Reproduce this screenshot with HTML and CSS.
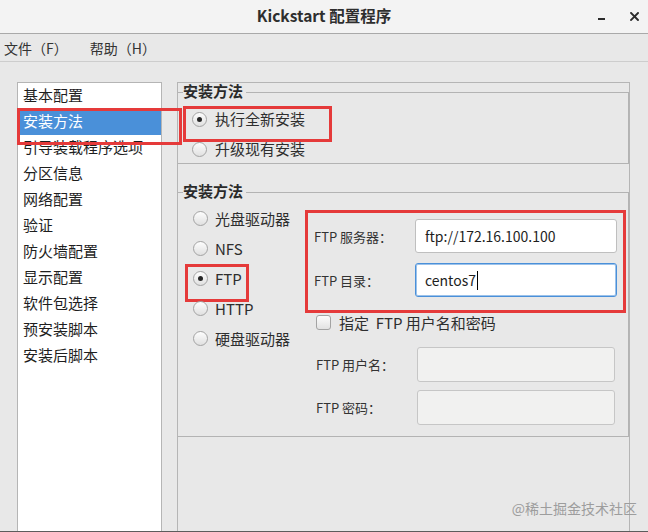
FILE: index.html
```html
<!DOCTYPE html>
<html lang="zh-CN">
<head>
<meta charset="utf-8">
<title>Kickstart 配置程序</title>
<link rel="stylesheet" href="styles.css">
</head>
<body>
<div class="window">
  <header class="titlebar">
    <div class="title">Kickstart 配置程序</div>
    <div class="wm-buttons">
      <span class="wm-min"></span>
      <svg class="wm-close" width="9" height="9" viewBox="0 0 9 9"><path d="M1 1L8 8M8 1L1 8" stroke="#2b2b2b" stroke-width="1.9" stroke-linecap="square" fill="none"/></svg>
    </div>
  </header>
  <nav class="menubar">
    <span class="menu-item">文件（F）</span>
    <span class="menu-item">帮助（H）</span>
  </nav>
  <main class="main">
    <ul class="nav-list">
      <li>基本配置</li>
      <li class="selected">安装方法</li>
      <li>引导装载程序选项</li>
      <li>分区信息</li>
      <li>网络配置</li>
      <li>验证</li>
      <li>防火墙配置</li>
      <li>显示配置</li>
      <li>软件包选择</li>
      <li>预安装脚本</li>
      <li>安装后脚本</li>
    </ul>
    <section class="panel">
      <fieldset class="frame frame-top">
        <legend>安装方法</legend>
        <div class="radio-list">
          <div class="radio-row marked"><span class="radio checked"></span>执行全新安装</div>
          <div class="radio-row"><span class="radio"></span>升级现有安装</div>
        </div>
      </fieldset>
      <fieldset class="frame frame-method">
        <legend>安装方法</legend>
        <div class="method-body">
          <div class="method-list">
            <div class="radio-row"><span class="radio"></span>光盘驱动器</div>
            <div class="radio-row"><span class="radio"></span>NFS</div>
            <div class="radio-row marked-ftp"><span class="radio checked"></span>FTP</div>
            <div class="radio-row"><span class="radio"></span>HTTP</div>
            <div class="radio-row"><span class="radio"></span>硬盘驱动器</div>
          </div>
          <div class="ftp-config">
            <div class="ftp-main">
              <span class="field-label">FTP 服务器：</span>
              <div class="entry">ftp://172.16.100.100</div>
              <span class="field-label">FTP 目录：</span>
              <div class="entry focused">centos7<span class="caret"></span></div>
            </div>
            <div class="check-row"><span class="checkbox"></span>指定&nbsp; FTP 用户名和密码</div>
            <div class="ftp-auth">
              <span class="field-label">FTP 用户名：</span>
              <div class="entry disabled"></div>
              <span class="field-label">FTP 密码：</span>
              <div class="entry disabled"></div>
            </div>
          </div>
        </div>
      </fieldset>
    </section>
  </main>
  <div class="watermark">@稀土掘金技术社区</div>
</div>
</body>
</html>
```
FILE: styles.css
```css
* { box-sizing: border-box; }
html, body { margin: 0; padding: 0; }
body {
  font-family: "Noto Sans CJK SC", "DejaVu Sans", sans-serif;
  color: #2a2a2a;
  background: #e8e8e8;
}
.window {
  width: 648px;
  height: 532px;
  display: flex;
  flex-direction: column;
  background: #e8e8e8;
  border-bottom: 1px solid #5c5c5c;
  position: relative;
  overflow: hidden;
}
.titlebar {
  height: 34px;
  flex: none;
  display: grid;
  grid-template-columns: 1fr auto 1fr;
  align-items: center;
  background: #f3f3f3;
  border-bottom: 1px solid #a9a9a9;
}
.title {
  grid-column: 2;
  font-size: 15.5px;
  font-weight: bold;
  line-height: 20px;
  padding-bottom: 4px;
  color: #2e2e2e;
}
.wm-buttons {
  grid-column: 3;
  justify-self: end;
  display: flex;
  align-items: center;
  gap: 25px;
  padding-right: 9px;
}
.wm-min {
  width: 7px;
  height: 2px;
  background: #2b2b2b;
  margin-top: 4px;
}
.wm-close { display: block; }
.menubar {
  height: 28px;
  flex: none;
  display: flex;
  align-items: center;
  gap: 22px;
  padding-left: 4px;
  font-size: 14px;
  color: #333;
  border-bottom: 1px solid #cdcdcd;
}
.main {
  flex: 1;
  min-height: 0;
  display: flex;
  align-items: stretch;
  padding: 20px 0 0 17px;
}
.nav-list {
  list-style: none;
  margin: 0;
  padding: 0;
  width: 145px;
  flex: none;
  background: #fff;
  border: 1px solid #b5b5b5;
  border-bottom: none;
  font-size: 15px;
  color: #1e1e1e;
}
.nav-list li {
  height: 26px;
  line-height: 23px;
  padding: 0 0 3px 5px;
  white-space: nowrap;
}
.nav-list li.selected {
  background: #4a90d9;
  color: #fff;
  position: relative;
}
.nav-list li.selected::after {
  content: "";
  position: absolute;
  left: -1px;
  top: -1px;
  width: 159px;
  height: 31px;
  border: 3px solid #e53a3a;
}
.panel {
  margin-left: 15px;
  width: 453px;
  flex: none;
  border: 1px solid #b5b5b5;
  border-bottom: none;
}
.frame {
  margin: 0;
  padding: 0;
  min-width: 0;
  border: 1px solid #b3b3b3;
  border-left: none;
}
.frame legend {
  margin-left: 5px;
  padding: 0 3px 2px 0;
  font-size: 15px;
  font-weight: bold;
  line-height: 16px;
  color: #2a2a2a;
}
.frame-top { margin-top: 0; }
.frame-method { margin-top: 19px; }
.radio-list {
  display: flex;
  flex-direction: column;
  gap: 4px;
  padding: 5px 0 1px;
}
.radio-row {
  display: flex;
  align-items: center;
  gap: 8px;
  font-size: 15px;
  color: #2e2e2e;
  position: relative;
  white-space: nowrap;
}
.radio-list .radio-row {
  height: 26px;
  padding-left: 14px;
  padding-bottom: 2px;
}
.radio-list .radio { margin-top: 2px; }
.radio-row.marked::after {
  content: "";
  position: absolute;
  left: 5px;
  top: 0;
  width: 143px;
  height: 30px;
  border: 3px solid #e53a3a;
}
.radio {
  width: 15px;
  height: 15px;
  flex: none;
  border-radius: 50%;
  border: 1px solid #a3a3a3;
  background: linear-gradient(#fdfdfd, #e0e0e0);
  position: relative;
}
.radio.checked::before {
  content: "";
  position: absolute;
  left: 4px;
  top: 4px;
  width: 5px;
  height: 5px;
  border-radius: 50%;
  background: #262626;
}
.method-body {
  display: flex;
  align-items: flex-start;
  padding-bottom: 11px;
}
.method-list {
  width: 127px;
  flex: none;
  display: flex;
  flex-direction: column;
  padding-top: 2px;
}
.method-list .radio-row {
  height: 30px;
  padding-left: 15px;
  gap: 7px;
}
.radio-row.marked-ftp::after {
  content: "";
  position: absolute;
  left: 7px;
  top: 1px;
  width: 58px;
  height: 32px;
  border: 3px solid #e53a3a;
}
.ftp-config {
  width: 321px;
  flex: none;
  margin-top: 9px;
}
.ftp-main {
  border: 3px solid #e53a3a;
  padding: 6px 6px 13px 6px;
  display: grid;
  grid-template-columns: 101px 202px;
  grid-auto-rows: 34px;
  row-gap: 10px;
  align-items: center;
}
.field-label {
  font-size: 13px;
  color: #333;
  white-space: nowrap;
}
.entry {
  height: 100%;
  border: 1px solid #bfbfbf;
  border-radius: 3px;
  background: #fff;
  padding-left: 9px;
  font-size: 14px;
  line-height: 32px;
  color: #1e1e1e;
  display: flex;
  align-items: center;
}
.entry.focused {
  border-color: #4a90d9;
  box-shadow: inset 0 0 0 1px rgba(74, 144, 217, 0.55);
}
.entry.disabled {
  background: #f1f1f0;
  border-color: #c6c6c6;
}
.caret {
  display: inline-block;
  width: 1px;
  height: 19px;
  background: #000;
  margin-left: 1px;
}
.check-row {
  height: 20px;
  display: flex;
  align-items: center;
  gap: 8px;
  padding-left: 11px;
  padding-bottom: 2px;
  font-size: 15px;
  color: #2e2e2e;
  white-space: nowrap;
}
.checkbox {
  width: 15px;
  height: 15px;
  flex: none;
  border: 1px solid #a3a3a3;
  border-radius: 3px;
  background: linear-gradient(#fdfdfd, #e2e2e2);
}
.ftp-auth {
  margin-top: 14px;
  padding-left: 11px;
  display: grid;
  grid-template-columns: 101px 198px;
  grid-auto-rows: 35px;
  row-gap: 8px;
  align-items: center;
}
.watermark {
  position: absolute;
  right: 11px;
  bottom: 14px;
  font-size: 14px;
  line-height: 18px;
  color: #9d9d9d;
}
```
